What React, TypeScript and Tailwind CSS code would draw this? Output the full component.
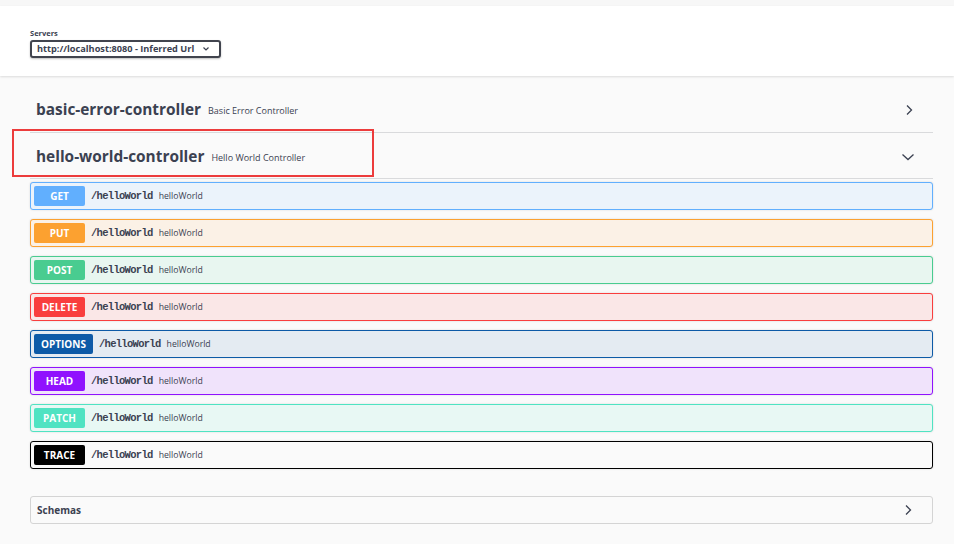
import React from 'react';

type Op = {
  method: string;
  badge: string;
  box: string;
};

const ops: Op[] = [
  { method: 'GET', badge: 'bg-[#61affe]', box: 'bg-[#ebf3fb] border-[#61affe]' },
  { method: 'PUT', badge: 'bg-[#fca130]', box: 'bg-[#fbf1e6] border-[#fca130]' },
  { method: 'POST', badge: 'bg-[#49cc90]', box: 'bg-[#e8f6f0] border-[#49cc90]' },
  { method: 'DELETE', badge: 'bg-[#f93e3e]', box: 'bg-[#fae7e7] border-[#f93e3e]' },
  { method: 'OPTIONS', badge: 'bg-[#0d5aa7]', box: 'bg-[#e4ebf2] border-[#0d5aa7]' },
  { method: 'HEAD', badge: 'bg-[#9012fe]', box: 'bg-[#f0e3fb] border-[#9012fe]' },
  { method: 'PATCH', badge: 'bg-[#50e3c2]', box: 'bg-[#e8f8f4] border-[#50e3c2]' },
  { method: 'TRACE', badge: 'bg-[#000000]', box: 'bg-[#fafafa] border-[#000000]' },
];

function ChevronRight() {
  return (
    <svg width="12" height="12" viewBox="0 0 12 12" fill="none" stroke="#3b4151" strokeWidth="1.3">
      <path d="M4 1.5 L8.5 6 L4 10.5" />
    </svg>
  );
}

function ChevronDown() {
  return (
    <svg width="14" height="12" viewBox="0 0 14 12" fill="none" stroke="#3b4151" strokeWidth="1.3">
      <path d="M1.5 3.5 L7 8.5 L12.5 3.5" />
    </svg>
  );
}

function TagRow({ name, desc, open }: { name: string; desc: string; open?: boolean }) {
  return (
    <div
      className={`flex items-center border-b border-[#d9dadc] pl-[6px] pr-[18px] ${
        open ? 'h-[46px] pt-[3px]' : 'h-[45px]'
      }`}
    >
      <span className="text-[15.4px] font-bold text-[#3b4151]">{name}</span>
      <span className="ml-[7px] pt-[2px] text-[9px] text-[#3b4151]">{desc}</span>
      <div className="ml-auto flex items-center">{open ? <ChevronDown /> : <ChevronRight />}</div>
    </div>
  );
}

export default function App() {
  return (
    <div className="min-h-[544px] bg-[#fafafa] font-['Open_Sans',sans-serif] text-[#3b4151]">
      <div className="h-[6px] bg-[#f7f7f7]" />
      <div className="h-[70px] bg-white pl-[30px] pt-[22px] shadow-[0_1px_2px_rgba(0,0,0,0.12)]">
        <div className="text-[7.5px] font-bold leading-[10px]">Servers</div>
        <div className="mt-[2px] flex h-[18px] w-[191px] items-center rounded-[3px] border-2 border-[#41444e] bg-white pl-[5px] pr-[9px] shadow-[0_1px_2px_rgba(0,0,0,0.25)]">
          <span className="text-[9.2px] font-bold">http://localhost:8080 - Inferred Url</span>
          <svg className="ml-auto" width="8" height="6" viewBox="0 0 8 6" fill="none" stroke="#3b4151" strokeWidth="1.2">
            <path d="M1.5 1.5 L4 4 L6.5 1.5" />
          </svg>
        </div>
      </div>

      <div className="pl-[30px] pr-[21px] pt-[12px]">
        <TagRow name="basic-error-controller" desc="Basic Error Controller" />
        <div className="relative">
          <TagRow name="hello-world-controller" desc="Hello World Controller" open />
          <div className="absolute left-[-18px] top-[-4px] h-[48px] w-[362px] border-2 border-[#ec3c3c]" />
        </div>

        <div className="mt-[3px] flex flex-col gap-[9px]">
          {ops.map((op) => (
            <div
              key={op.method}
              className={`flex h-[28px] items-center rounded-[3px] border px-[3px] shadow-[0_0_2px_rgba(0,0,0,0.15)] ${op.box}`}
            >
              <span
                className={`flex h-[20px] min-w-[51px] items-center justify-center rounded-[2px] px-[7px] text-[10px] font-bold text-white ${op.badge}`}
              >
                {op.method}
              </span>
              <span className="ml-[6px] pt-[2px] font-['Liberation_Mono',monospace] text-[10.5px] font-bold tracking-[-0.7px] text-[#3b4151]">
                /helloWorld
              </span>
              <span className="ml-[6px] pt-[2px] text-[8.7px] text-[#3b4151]">helloWorld</span>
            </div>
          ))}
        </div>

        <div className="mt-[27px] flex h-[28px] items-center rounded-[3px] border border-[#d4d4d4] pl-[6px] pr-[18px]">
          <span className="text-[10px] font-bold text-[#3b4151]">Schemas</span>
          <div className="ml-auto flex items-center">
            <ChevronRight />
          </div>
        </div>
      </div>
    </div>
  );
}
